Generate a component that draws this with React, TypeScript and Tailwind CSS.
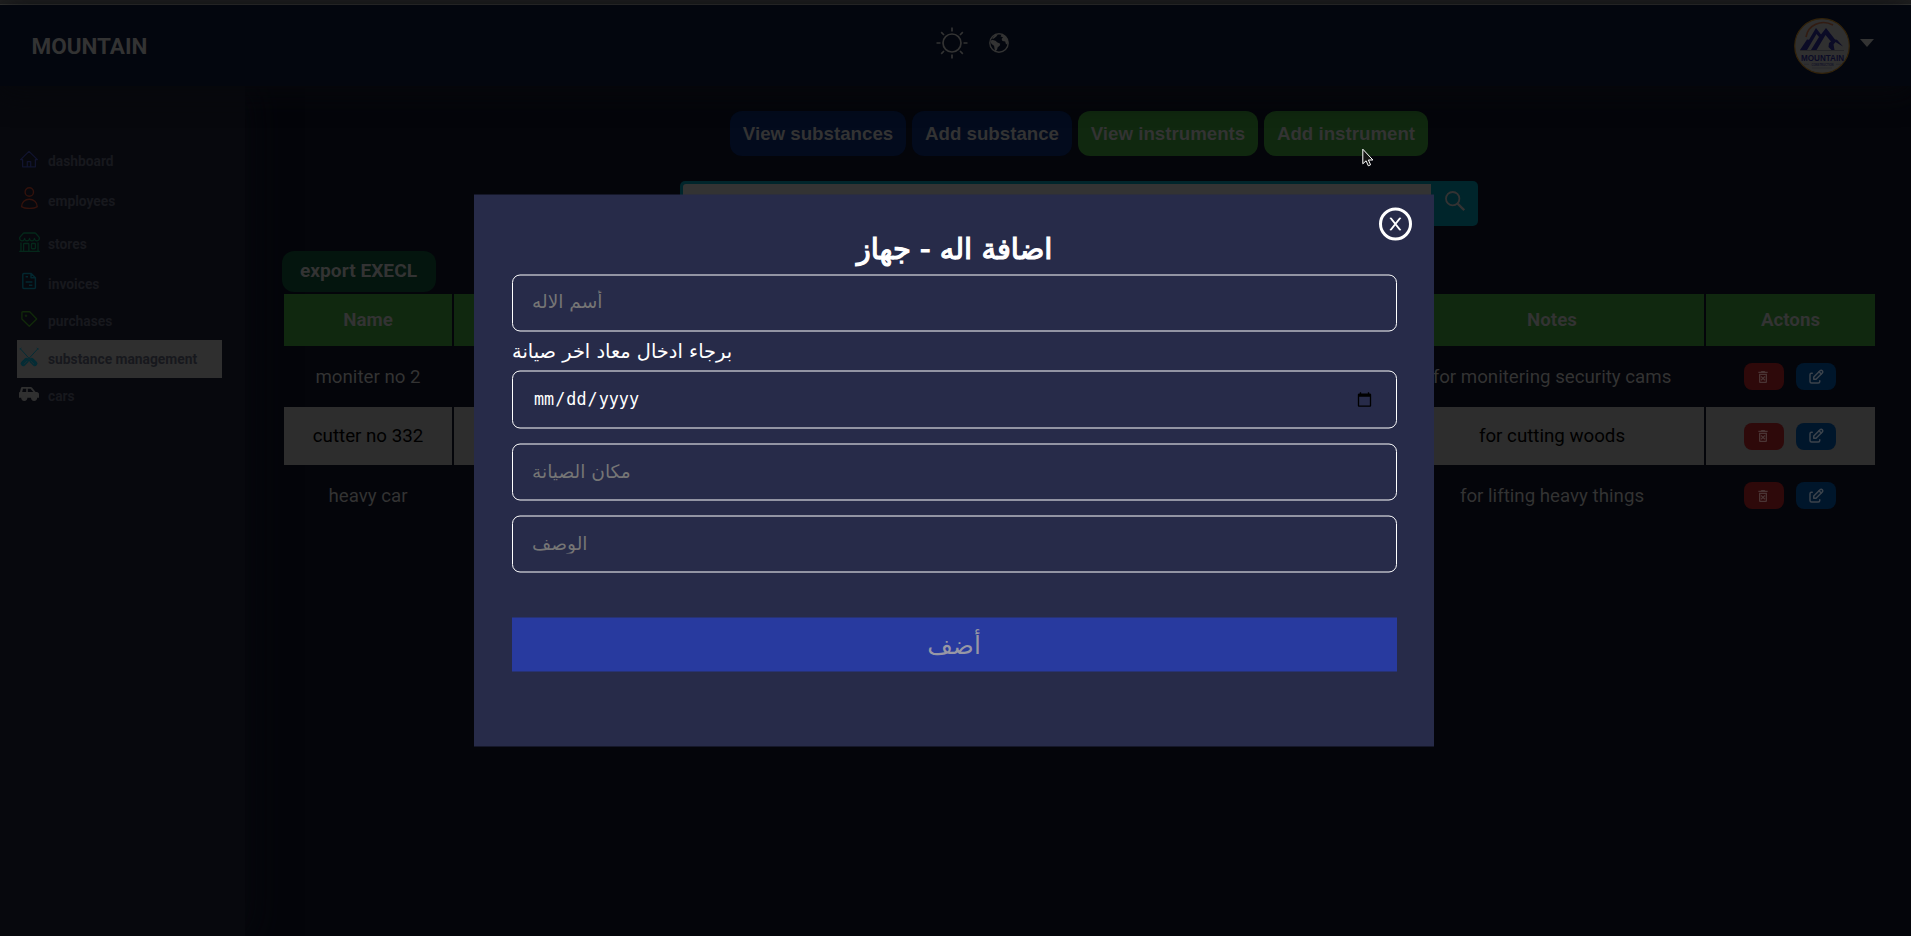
import React from "react";
import { TbEdit } from "react-icons/tb";
import { MdOutlineDeleteForever } from "react-icons/md";
import { BsShop } from "react-icons/bs";

function Icon({ className, children }: { className: string; children: React.ReactNode }) {
  return (
    <svg viewBox="0 0 24 24" fill="none" stroke="currentColor" className={`size-6 shrink-0 ${className}`}>
      {children}
    </svg>
  );
}

const navItems = [
  {
    label: "dashboard",
    row: "h-[38px]",
    icon: (
      <Icon className="mb-[5px] text-[#11142f]">
        <path strokeWidth="1.3" strokeLinejoin="round" d="M3.6 12.6 12 4.4l8.4 8.2h-2v7.2H5.6v-7.2zM10.3 19.6v-5h3.4v5" />
      </Icon>
    ),
  },
  {
    label: "employees",
    row: "h-[43px]",
    icon: (
      <Icon className="mb-[7px] text-[#32120c]">
        <circle cx="12.3" cy="6" r="4.2" strokeWidth="1.4" />
        <path strokeWidth="1.4" d="M4.6 20.6c0-4.4 3.400-7.400 7.700-7.400s7.900 3 7.900 7.400c-3.200 2.400-12.400 2.400-15.600 0z" />
      </Icon>
    ),
  },
  {
    label: "stores",
    row: "h-[43px]",
    icon: <BsShop className="ml-[2px] mr-[1px] mb-[7px] size-[21px] shrink-0 text-[#04281a]" />,
  },
  {
    label: "invoices",
    row: "h-[37px]",
    icon: (
      <Icon className="mb-[7px] text-[#03272f]">
        <path strokeWidth="1.5" strokeLinejoin="round" d="M5.800 5.500c0-.6.4-1 1-1h7.400l4.200 4.200v9.800c0 .6-.4 1-1 1H6.800c-.6 0-1-.4-1-1zM14 4.600v4.200h4.200M8.600 7.800h2.400M8.600 12.900h6.800M12 16.200h3.400" />
      </Icon>
    ),
  },
  {
    label: "purchases",
    row: "h-[37px]",
    icon: (
      <Icon className="mb-[5px] text-[#11290a]">
        <path strokeWidth="1.4" strokeLinejoin="round" d="M4.900 5.500c0-.5.300-.8.8-.8h7l7 7.300-7.400 7.300-7.400-7.300z" />
        <circle cx="9" cy="8.700" r=".9" fill="currentColor" strokeWidth=".6" />
      </Icon>
    ),
  },
  {
    label: "substance management",
    row: "h-[38px]",
    active: true,
    icon: (
      <Icon className="mb-[5px] text-[#042c35]">
        <path strokeWidth="1" d="M3 3.400 13.600 15M21.200 3.400 10.500 15M2.800 4.400l1.600-1.300M21.400 4.400l-1.600-1.300" />
        <path strokeWidth="5" strokeLinecap="round" d="m14.600 15.400 3.300 3.200M9.500 15.400l-3.300 3.200" />
        <path stroke="#2f2f2f" strokeWidth=".6" d="m13.600 15.800 3.400 3.400M10.400 15.800 7 19.200" />
      </Icon>
    ),
  },
  {
    label: "cars",
    row: "h-[37px]",
    icon: (
      <Icon className="mb-[5px] text-[#303030]">
        <path
          fill="currentColor"
          stroke="none"
          fillRule="evenodd"
          d="M5.200 5h8.600c.5 0 .9.200 1.200.6l3.600 4.400h1.200c1.200 0 2.200 1 2.200 2.200v3.600h-1.800a3.100 3.100 0 0 1-6.200 0h-3.600a3.100 3.100 0 0 1-6.200 0H2v-4.600c0-.8.500-1.200 1-1.400l1-4c.2-.500.600-.8 1.200-.8zM6 6.700 5.200 10h4V6.700zM10.800 6.700V10h5.500l-2.800-3.300z"
        />
        <circle cx="7.200" cy="16" r="1.700" fill="currentColor" strokeWidth=".6" />
        <circle cx="17" cy="16" r="1.700" fill="currentColor" strokeWidth=".6" />
      </Icon>
    ),
  },
];

const rows = [
  { name: "moniter no 2", notes: "for monitering security cams", cell: "text-[#333333]", height: "h-[57px]" },
  { name: "cutter no 332", notes: "for cutting woods", cell: "bg-[#2d2d2d] text-black", height: "h-[58px]" },
  { name: "heavy car", notes: "for lifting heavy things", cell: "text-[#333333]", height: "h-[57px]" },
];

const grid = "grid grid-cols-[168px_314px_314px_312px_304px_169px] gap-x-[2px]";

function Header() {
  return (
    <header className="z-10 flex h-[81px] shrink-0 items-center bg-[#03060e] pl-[31.500px] pr-[37px] shadow-[0_4px_30px_2px_#07080c]">
      <h1 className="w-[870px] pt-[2px] text-[22.500px] font-bold text-[#333333]">MOUNTAIN</h1>
      <div className="flex flex-1 items-center pb-[5px] pl-[34.500px] text-[#333333]">
        <svg viewBox="0 0 32 32" className="size-8" fill="none" stroke="currentColor">
          <circle cx="16" cy="16" r="9" strokeWidth="1.700" />
          <path strokeWidth="1.700" d="M16 .5v4M16 27.500v4M.5 16h4M27.500 16h4M5.200 5.200 8 8M24 24l2.800 2.800M5.200 26.800 8 24M24 8l2.800-2.800" />
        </svg>
        <svg viewBox="0 0 20 20" className="ml-[21px] size-5">
          <circle cx="10" cy="10" r="9.200" fill="none" stroke="currentColor" strokeWidth="1.400" />
          <path
            fill="currentColor"
            d="M1.200 8.500 3 6.800l3.500 1 1.600 1.400 3.200 1.600-.6 2-2 1.500-.6 2.200-1.300 1.800c-1.500-.6-1.300-4.600-1.800-5.500L2.600 11zM12.600 1.200c3.600.8 6 4 6.600 7.300l-.8 3.200-1.600-1-.6-2.200-2.800-.6-.8-2 1.400-1.600-2.400-.8zM3 5.600 6 2l3-.8-1.600 2.400L4.600 5.800z"
          />
        </svg>
      </div>
      <Logo />
      <svg viewBox="0 0 14 8" className="mb-[5px] ml-[10px] h-2 w-[14px] text-[#333333]">
        <path fill="currentColor" d="M0 0h14L7 8z" />
      </svg>
    </header>
  );
}

function Logo() {
  return (
    <svg viewBox="0 0 56 56" className="size-14" fill="none">
      <circle cx="28" cy="28" r="27.300" fill="#303030" stroke="#33230a" strokeWidth="1.200" />
      <path stroke="#321c12" strokeWidth="1.600" d="M12 19C14 7 27 1 39 7" />
      <path
        fill="#0b0b26"
        d="M6 32 13 21.500l2 .3L22 10l5 6.500L32 10l9 11.500 2 .3 6 6.700-7.500-4.500-2 2.500 1 5.500h-3l-3-3 .5-4 2-1.500-5.500-6.500L22.500 32H17l8-13-2.500-3L13 32z"
      />
      <path stroke="#202024" strokeWidth=".7" d="M6 32.500h44" />
      <text x="28.500" y="42.500" textAnchor="middle" textLength="43" lengthAdjust="spacingAndGlyphs" fill="#0b0b26" className="font-['Liberation_Sans'] text-[9.500px] font-bold">
        MOUNTAIN
      </text>
      <text x="28.500" y="47.800" textAnchor="middle" textLength="22" lengthAdjust="spacingAndGlyphs" fill="#121228" className="font-['Liberation_Sans'] text-[3.800px] font-bold">
        CONSTRUCTION
      </text>
      <path stroke="#25252b" strokeWidth=".6" d="M10 46.300h5M42 46.300h5M18 50h20" />
    </svg>
  );
}

function Sidebar() {
  return (
    <nav className="w-[245px] shrink-0 bg-[#07080d] pl-[17px] pt-[56px] shadow-[4px_0_36px_2px_#07080d]">
      {navItems.map((item) => (
        <div
          key={item.label}
          className={`flex w-[205px] items-center gap-[7px] text-[13.800px] font-bold ${item.row} ${
            item.active ? "bg-[#2f2f2f] text-[#17181d]" : "text-[#17181d]"
          }`}
        >
          {item.icon}
          <span>{item.label}</span>
        </div>
      ))}
    </nav>
  );
}

function Toolbar() {
  const base = "h-[45px] rounded-xl pt-px font-['Liberation_Sans'] text-[18.720px] font-bold text-[#333333]";
  return (
    <div className="flex gap-[6px] pl-[447px]">
      <button className={`${base} w-[176px] bg-[#030b1d]`}>View substances</button>
      <button className={`${base} w-[160px] bg-[#030b1d]`}>Add substance</button>
      <button className={`${base} w-[180px] bg-[#10280f]`}>View instruments</button>
      <button className={`${base} w-[164px] bg-[#10280f]`}>Add instrument</button>
    </div>
  );
}

function Content() {
  return (
    <main className="flex flex-1 flex-col pl-[38px] pt-[25px]">
      <Toolbar />
      <div className="ml-[397px] mt-[25px] flex h-[45px] w-[798px] rounded-[5px] bg-[#00252b] p-[3px]">
        <div className="h-full w-[748px] rounded-l-[3px] bg-[#333333]" />
        <svg viewBox="0 0 20 20" className="ml-[13.500px] mt-[6.500px] size-5 text-[#333333]" fill="none" stroke="currentColor">
          <circle cx="7.700" cy="7.700" r="6.700" strokeWidth="1.800" />
          <path strokeWidth="2.300" d="m12.600 12.600 6.600 6.600" />
        </svg>
      </div>
      <button className="-ml-px mt-[25px] h-[41px] w-[154px] rounded-xl bg-[#04150e] pr-px text-[19.200px] font-bold text-[#333333]">
        export EXECL
      </button>
      <div className="ml-px mt-[2px] flex flex-col gap-[2px] text-center text-[18.720px]">
        <div className={`${grid} font-bold text-[#333333]`}>
          {["Name", "", "", "", "Notes", "Actons"].map((title, i) => (
            <div key={i} className="flex h-[52px] items-center justify-center bg-[#10280f]">
              {title}
            </div>
          ))}
        </div>
        {rows.map((row) => (
          <div key={row.name} className={grid}>
            <div className={`flex items-center justify-center pt-px ${row.height} ${row.cell}`}>{row.name}</div>
            <div className={row.cell} />
            <div className={row.cell} />
            <div className={row.cell} />
            <div className={`flex items-center justify-center whitespace-nowrap pt-px ${row.cell}`}>{row.notes}</div>
            <div className={`flex items-center justify-center gap-3 pr-[2px] ${row.cell}`}>
              <button className="flex h-[27px] w-10 items-center justify-center rounded-lg bg-[#2e090a] pr-px text-[#4a3434]">
                <MdOutlineDeleteForever className="size-4" />
              </button>
              <button className="flex h-[27px] w-10 items-center justify-center rounded-lg bg-[#00162b] text-[#3b434c]">
                <TbEdit className="size-[18px]" />
              </button>
            </div>
          </div>
        ))}
      </div>
    </main>
  );
}

function Modal() {
  const field =
    "block w-full rounded-lg border border-white bg-transparent px-5 text-white outline-none placeholder:text-[#757575]";
  return (
    <div
      role="dialog"
      className="absolute left-[474px] top-[194px] z-20 h-[552px] w-[960px] translate-y-[0.500px] bg-[#272b49] pl-[38px] pr-[37px] pt-[34px] font-['DejaVu_Sans',sans-serif]"
    >
      <button className="absolute right-[22px] top-[13px] flex size-[33px] items-center justify-center rounded-full border-[3px] border-white text-white">
        <svg viewBox="0 0 13 13" className="size-[13px]" fill="none" stroke="currentColor">
          <path strokeWidth="1.900" d="M1.200 0 11.600 13M11.600 0 1.200 13" />
        </svg>
      </button>
      <h2 className="h-[46px] text-center text-[29px] leading-[40px] text-white [-webkit-text-stroke:1.200px_white]">اضافة اله - جهاز</h2>
      <input className={`${field} h-[57px] pb-1 pl-[19px] text-[18.600px]`} placeholder="أسم الاله" />
      <p className="h-[39px] text-[19.400px] leading-[39px] text-white">برجاء ادخال معاد اخر صيانة</p>
      <input type="date" className={`${field} h-[58px] pr-[21px] font-['DejaVu_Sans_Mono',monospace] text-[16.800px]`} />
      <input className={`${field} mt-[15px] h-[57px] pb-[3px] pl-[19px] text-[18.600px]`} placeholder="مكان الصيانة" />
      <input className={`${field} mt-[15px] h-[57px] pb-[3px] pl-[19px] text-[18.600px]`} placeholder="الوصف" />
      <button className="mt-[45px] h-[54px] w-full bg-[#283a9f] pr-px pt-px text-[24.800px] text-[#9797a5]">أضف</button>
    </div>
  );
}

export default function App() {
  return (
    <div className="relative flex h-[936px] w-[1911px] flex-col overflow-hidden bg-[#04050a] font-['Roboto',sans-serif]">
      <div className="h-[5px] shrink-0 border-b border-[#3a3a38] bg-[#232323]" />
      <Header />
      <div className="flex flex-1">
        <Sidebar />
        <Content />
      </div>
      <Modal />
      <svg viewBox="0 0 12 19" className="absolute left-[1362px] top-[148px] z-30 h-[19px] w-3">
        <path fill="#151515" stroke="#fff" strokeWidth="1" d="M.8 1.200v14.600l3.300-3 2.200 5 2.300-1-2.200-4.800h4.500z" />
      </svg>
    </div>
  );
}
